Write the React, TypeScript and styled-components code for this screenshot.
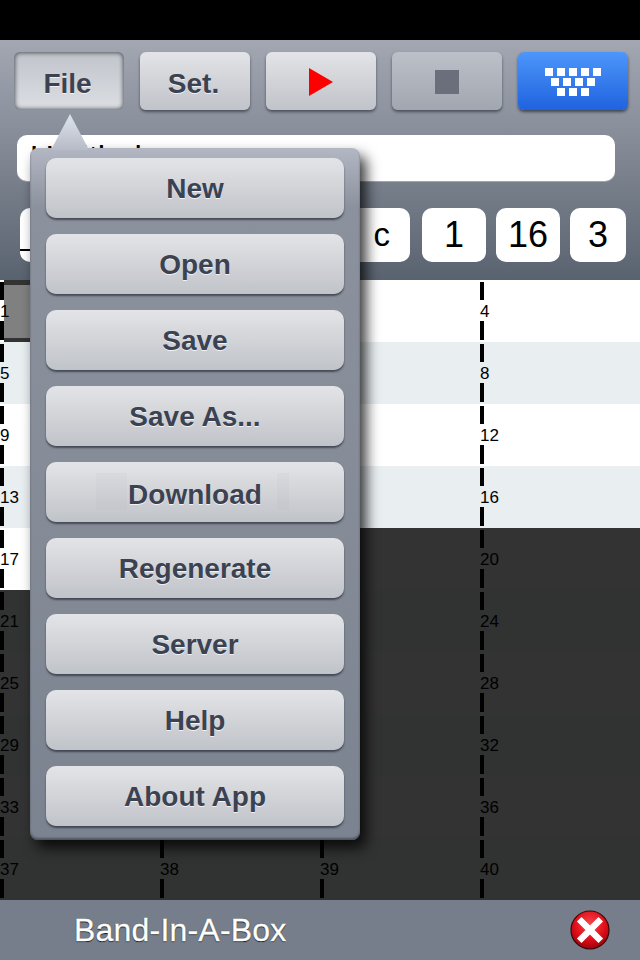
import React from 'react';
import styled, { createGlobalStyle, css } from 'styled-components';

const GlobalStyle = createGlobalStyle`
  html, body {
    margin: 0;
    padding: 0;
    background: #000;
  }
  body {
    font-family: "Liberation Sans", Arial, sans-serif;
  }
`;

const MENU_ITEMS = ['New', 'Open', 'Save', 'Save As...', 'Download', 'Regenerate', 'Server', 'Help', 'About App'];

const DARK_FROM = 4;

const KEY_ROWS = [5, 4, 3];

export default function App() {
  const rows = Array.from({ length: 10 }, (_, i) => i);
  return (
    <Screen>
      <GlobalStyle />
      <StatusBar />
      <Header>
        <Toolbar>
          <ToolButton $pressed>
            <ToolLabel>File</ToolLabel>
          </ToolButton>
          <ToolButton>
            <ToolLabel>Set.</ToolLabel>
          </ToolButton>
          <ToolButton>
            <PlayIcon />
          </ToolButton>
          <ToolButton $disabled>
            <StopIcon />
          </ToolButton>
          <ToolButton $blue>
            <KeyboardIcon>
              {KEY_ROWS.map((count) => (
                <KeyRow key={count}>
                  {Array.from({ length: count }, (_, i) => (
                    <Key key={i} />
                  ))}
                </KeyRow>
              ))}
            </KeyboardIcon>
          </ToolButton>
        </Toolbar>
        <TitleField>Untitled</TitleField>
        <Params>
          <KeyBox>
            <ParamSmall>c</ParamSmall>
            <ParamUnderline />
          </KeyBox>
          <ParamBox $width={64}>1</ParamBox>
          <ParamBox $width={64}>16</ParamBox>
          <ParamBox $width={56}>3</ParamBox>
        </Params>
      </Header>
      <Grid>
        {rows.map((r) => (
          <Row key={r} $index={r}>
            {[0, 1, 2, 3].map((c) => {
              const bar = r * 4 + c + 1;
              return (
                <Bar key={c} $selected={bar === 1} $light={r === DARK_FROM && c === 0}>
                  <BarNumber>{bar}</BarNumber>
                </Bar>
              );
            })}
          </Row>
        ))}
      </Grid>
      <Footer>
        <FooterTitle>Band-In-A-Box</FooterTitle>
        <CloseIcon viewBox="0 0 40 40">
          <defs>
            <radialGradient id="closeRed" cx="50%" cy="35%" r="70%">
              <stop offset="0%" stopColor="#f5484e" />
              <stop offset="55%" stopColor="#e2101a" />
              <stop offset="100%" stopColor="#8e0008" />
            </radialGradient>
          </defs>
          <circle cx="20" cy="20" r="19" fill="url(#closeRed)" stroke="#3d0507" strokeWidth="1.2" />
          <path d="M11.5 11.5 L28.5 28.5 M28.5 11.5 L11.5 28.5" stroke="#fff" strokeWidth="6.5" strokeLinecap="square" />
        </CloseIcon>
      </Footer>
      <Popover>
        <PopoverArrow />
        {MENU_ITEMS.map((item) => (
          <MenuButton key={item}>
            {item === 'Download' && (
              <>
                <GhostPatch $left={50} $width={31} />
                <GhostPatch $left={231} $width={12} />
              </>
            )}
            <MenuLabel $low={item === 'Download'}>{item}</MenuLabel>
          </MenuButton>
        ))}
      </Popover>
    </Screen>
  );
}

const Screen = styled.div`
  position: relative;
  width: 640px;
  height: 960px;
  overflow: hidden;
  display: flex;
  flex-direction: column;
  background: #000;
`;

const StatusBar = styled.div`
  height: 40px;
  flex: none;
  background: #000;
`;

const Header = styled.div`
  height: 240px;
  flex: none;
  box-sizing: border-box;
  padding: 12px 12px 0 14px;
  background: linear-gradient(#a2a7b2, #8a909c 35%, #59636f);
`;

const Toolbar = styled.div`
  display: flex;
  gap: 16px;
`;

const ToolButton = styled.div<{ $pressed?: boolean; $disabled?: boolean; $blue?: boolean }>`
  width: 110px;
  height: 58px;
  box-sizing: border-box;
  padding-top: 2px;
  border-radius: 6px;
  display: flex;
  align-items: center;
  justify-content: center;
  background: linear-gradient(#e3e4e7, #c0c3c9);
  box-shadow: 0 2px 3px rgba(40, 45, 55, 0.65);
  ${(p) =>
    p.$pressed &&
    css`
      background: linear-gradient(#c0c4cb, #dcdee2);
      box-shadow: inset 0 0 4px 1px rgba(40, 45, 55, 0.75);
    `}
  ${(p) =>
    p.$disabled &&
    css`
      background: linear-gradient(#bcc0c8, #a1a6b0);
    `}
  ${(p) =>
    p.$blue &&
    css`
      background: linear-gradient(#4d96fa, #1f63df);
      box-shadow: 0 2px 3px rgba(40, 45, 55, 0.75);
    `}
`;

const ToolLabel = styled.span`
  margin: 3px 3px 0 0;
  font-size: 28px;
  font-weight: bold;
  color: #3b4252;
  text-shadow: 0 1px 0 rgba(255, 255, 255, 0.7);
`;

const PlayIcon = styled.div`
  width: 0;
  height: 0;
  border-left: 24px solid #fe0000;
  border-top: 14px solid transparent;
  border-bottom: 14px solid transparent;
`;

const StopIcon = styled.div`
  width: 24px;
  height: 24px;
  background: #6a6f7b;
`;

const KeyboardIcon = styled.div`
  display: flex;
  flex-direction: column;
  align-items: center;
  gap: 2px;
`;

const KeyRow = styled.div`
  display: flex;
  gap: 4px;
`;

const Key = styled.div`
  width: 8px;
  height: 8px;
  background: #fff;
`;

const TitleField = styled.div`
  margin: 25px 13px 0 3px;
  height: 46px;
  box-sizing: border-box;
  padding: 6px 0 0 13px;
  border-radius: 10px;
  background: #fff;
  color: #000;
  font-size: 33px;
  line-height: 34px;
  box-shadow: 0 1px 0 rgba(255, 255, 255, 0.3);
`;

const Params = styled.div`
  display: flex;
  gap: 10px;
  margin: 27px 0 0 6px;
`;

const ParamBox = styled.div<{ $width: number }>`
  width: ${(p) => p.$width}px;
  height: 54px;
  flex: none;
  border-radius: 10px;
  background: #fff;
  color: #000;
  display: flex;
  align-items: center;
  justify-content: center;
  font-size: 36px;
`;

const KeyBox = styled(ParamBox).attrs({ $width: 390 })`
  position: relative;
  box-sizing: border-box;
  margin-right: 2px;
  padding-right: 20px;
  justify-content: flex-end;
`;

const ParamSmall = styled.span`
  font-size: 33px;
`;

const ParamUnderline = styled.div`
  position: absolute;
  left: 0;
  bottom: 11px;
  width: 30px;
  height: 2px;
  background: #000;
`;

const Grid = styled.div`
  height: 620px;
  flex: none;
  display: flex;
  flex-direction: column;
`;

const Row = styled.div<{ $index: number }>`
  height: 62px;
  flex: none;
  display: flex;
  background: ${(p) =>
    p.$index >= DARK_FROM
      ? p.$index % 2 === 0
        ? '#333333'
        : '#313332'
      : p.$index % 2 === 0
        ? '#ffffff'
        : '#e9eef1'};
`;

const Bar = styled.div<{ $selected?: boolean; $light?: boolean }>`
  position: relative;
  width: 160px;
  height: 62px;
  flex: none;
  display: flex;
  align-items: center;
  background-image: linear-gradient(
    transparent 0 2px,
    #000 2px 20px,
    transparent 20px 41px,
    #000 41px 60px,
    transparent 60px
  );
  background-repeat: no-repeat;
  background-size: 4px 100%;
  ${(p) =>
    p.$light &&
    css`
      background-color: #fff;
    `}
  ${(p) =>
    p.$selected &&
    css`
      &::before {
        content: '';
        position: absolute;
        left: 4px;
        right: 0;
        top: 0;
        bottom: 0;
        box-sizing: border-box;
        background: #808080;
        border-top: 5px solid #333;
        border-bottom: 4px solid #333;
      }
    `}
`;

const BarNumber = styled.span`
  position: relative;
  margin-top: 2px;
  font-size: 17px;
  color: #000;
`;

const Footer = styled.div`
  height: 60px;
  flex: none;
  box-sizing: border-box;
  padding: 0 30px 0 74px;
  display: flex;
  align-items: center;
  justify-content: space-between;
  background: #757e8a;
`;

const FooterTitle = styled.div`
  color: #fff;
  font-size: 32px;
  letter-spacing: 0.2px;
  -webkit-text-stroke: 0.4px #fff;
  text-shadow: 0 0 1px #000, 0 1px 1px rgba(0, 0, 0, 0.8);
`;

const CloseIcon = styled.svg`
  width: 40px;
  height: 40px;
`;

const Popover = styled.div`
  position: absolute;
  left: 30px;
  top: 148px;
  width: 330px;
  height: 692px;
  box-sizing: border-box;
  padding: 10px 16px 0;
  display: flex;
  flex-direction: column;
  gap: 16px;
  border-radius: 8px;
  background: linear-gradient(#b2b7c3, #8b919d 60px, #848b97 400px, #7b8390);
  box-shadow: 6px 8px 14px rgba(0, 0, 0, 0.8), inset 0 -2px 2px rgba(50, 55, 65, 0.6);
`;

const PopoverArrow = styled.div`
  position: absolute;
  left: 21px;
  top: -34px;
  width: 38px;
  height: 36px;
  background: linear-gradient(#dfe3ec, #b6bbc7);
  clip-path: polygon(50% 0, 100% 100%, 0 100%);
`;

const MenuButton = styled.div`
  position: relative;
  height: 60px;
  flex: none;
  box-sizing: border-box;
  padding-top: 2px;
  border-radius: 10px;
  display: flex;
  align-items: center;
  justify-content: center;
  background: linear-gradient(#e3e4e7, #c0c3c9);
  box-shadow: 0 2px 2px rgba(40, 45, 55, 0.7);
`;

const GhostPatch = styled.div<{ $left: number; $width: number }>`
  position: absolute;
  left: ${(p) => p.$left}px;
  top: 11px;
  width: ${(p) => p.$width}px;
  height: 37px;
  background: rgba(150, 155, 165, 0.06);
`;

const MenuLabel = styled.span<{ $low?: boolean }>`
  margin-top: ${(p) => (p.$low ? '4px' : '0')};
  font-size: 28px;
  font-weight: bold;
  color: #3b4252;
  text-shadow: 0 1px 0 rgba(255, 255, 255, 0.75);
`;
